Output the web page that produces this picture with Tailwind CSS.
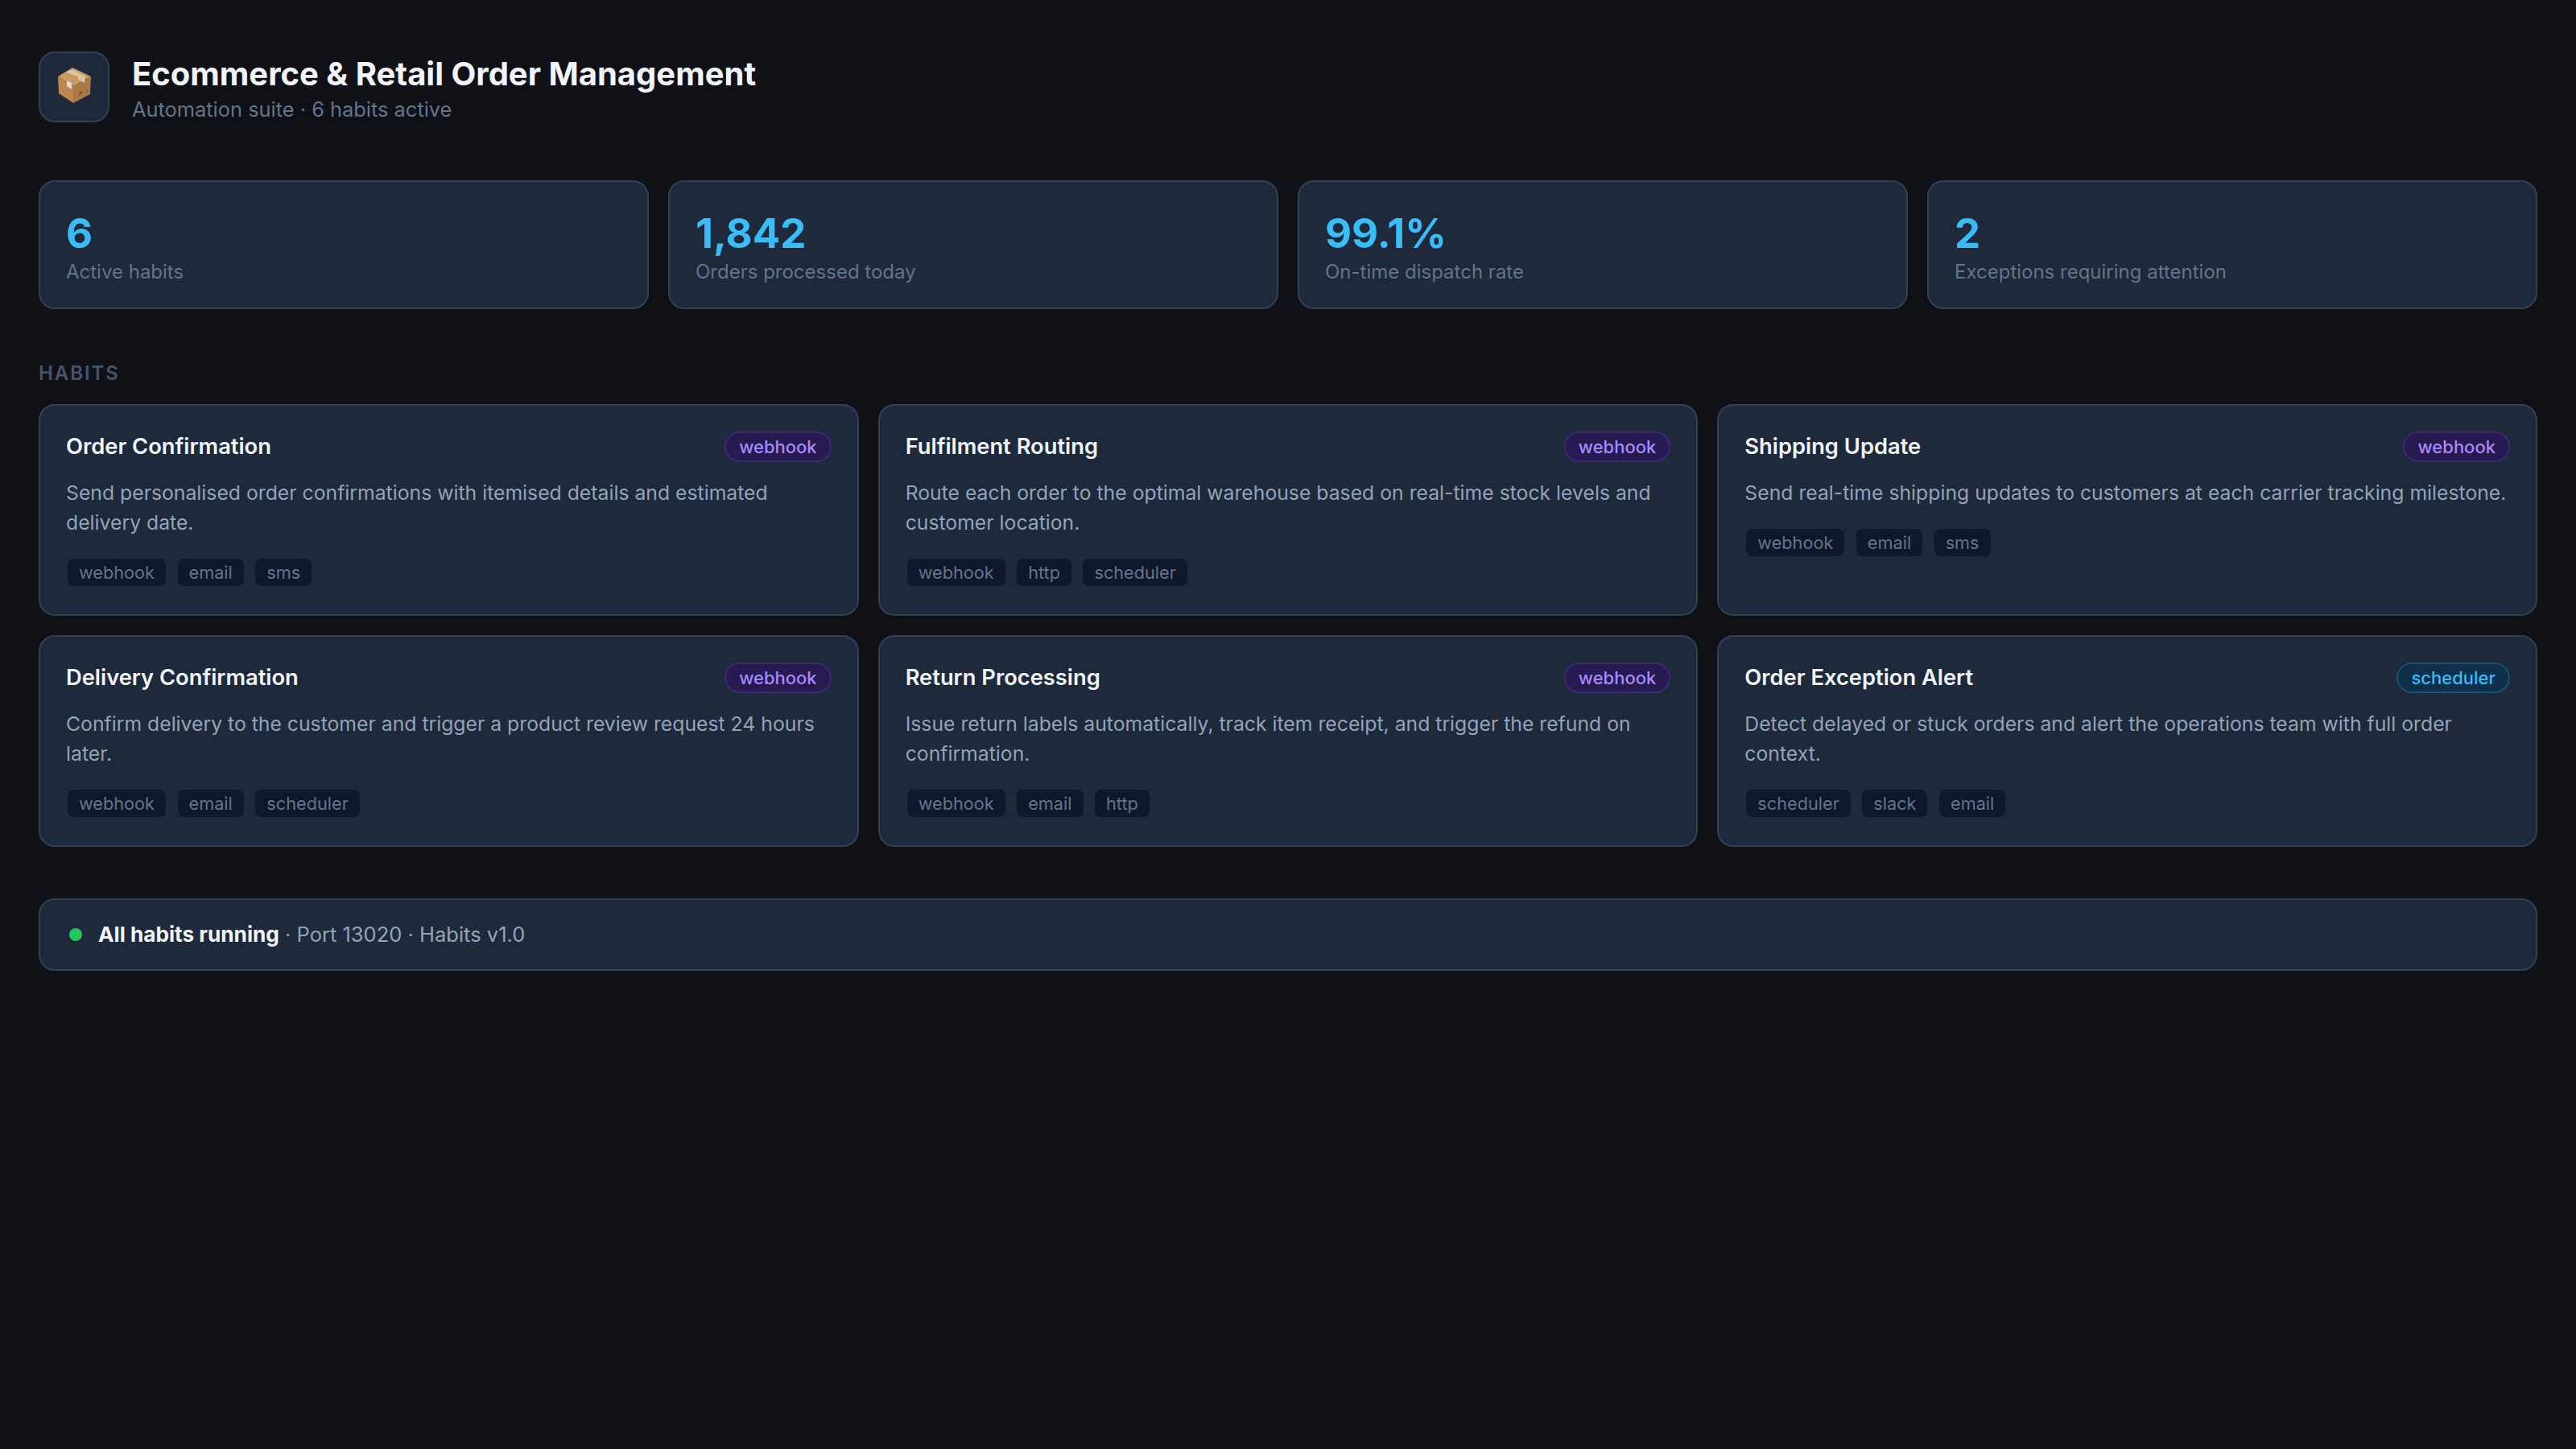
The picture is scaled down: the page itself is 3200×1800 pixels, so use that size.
<!DOCTYPE html>
<html lang="en">
    <head>
        <meta charset="UTF-8">
        <title>Ecommerce &amp; Retail Order Management</title>
        <script src="https://cdn.jsdelivr.net/npm/@tailwindcss/browser@4"></script>
    </head>
    <body class="bg-[#0f1117] min-h-screen font-['Inter',sans-serif] [font-optical-sizing:none] text-[#f1f5f9]">
        <div class="px-[48px] pt-[64px] pb-[64px]">
            <!-- header -->
            <div class="flex items-center gap-[28px] h-[88px]">
                <div class="w-[88px] h-[88px] shrink-0 rounded-[20px] bg-[#1e293b] border-2 border-[#334155] flex items-center justify-center">
                    <svg width="64" height="64" viewBox="60 76 64 64">
                        <path d="M90 84 L113 95 L91 107 L72 95 Z" fill="#c99a62"/>
                        <path d="M72 95 L91 107 L91 128 L73 116 Z" fill="#bb8850"/>
                        <path d="M113 95 L91 107 L91 128 L112 117 Z" fill="#ab7945"/>
                        <path d="M82 90 L90 86 L106 95 L105 103 L97 99 L97 95 Z" fill="#d9c3a3"/>
                        <path d="M83 100 L89 103 L89 111 L83 107 Z" fill="#ddd8d0"/>
                        <path d="M98 115 L103 113 L101 117 L99 118 Z" fill="#7a5230"/>
                        <path d="M107 111 L108.500 110.500 L108.500 115 L107 116 Z" fill="#8a5f38"/>
                    </svg>
                </div>
                <div>
                    <h1 class="text-[40px] leading-[54px] pt-[1px] font-bold text-[#f1f5f9]">Ecommerce &amp; Retail Order Management</h1>
                    <p class="mt-[1px] text-[25.4px] leading-[32px] text-[#64748b]">Automation suite · 6 habits active</p>
                </div>
            </div>

            <!-- stats -->
            <div class="grid grid-cols-4 gap-[24px] mt-[72px]">
                <div class="h-[160px] rounded-[20px] bg-[#1e293b] border-2 border-[#334155] px-[32px] pt-[32px]">
                    <div class="text-[51px] leading-[64px] mb-[1px] font-bold text-[#38bdf8]">6</div>
                    <div class="text-[24px] leading-[30px] text-[#64748b]">Active habits</div>
                </div>
                <div class="h-[160px] rounded-[20px] bg-[#1e293b] border-2 border-[#334155] px-[32px] pt-[32px]">
                    <div class="text-[51px] leading-[64px] mb-[1px] font-bold text-[#38bdf8]">1,842</div>
                    <div class="text-[24px] leading-[30px] text-[#64748b]">Orders processed today</div>
                </div>
                <div class="h-[160px] rounded-[20px] bg-[#1e293b] border-2 border-[#334155] px-[32px] pt-[32px]">
                    <div class="text-[51px] leading-[64px] mb-[1px] font-bold text-[#38bdf8]">99.1%</div>
                    <div class="text-[24px] leading-[30px] text-[#64748b]">On-time dispatch rate</div>
                </div>
                <div class="h-[160px] rounded-[20px] bg-[#1e293b] border-2 border-[#334155] px-[32px] pt-[32px]">
                    <div class="text-[51px] leading-[64px] mb-[1px] font-bold text-[#38bdf8]">2</div>
                    <div class="text-[24px] leading-[30px] text-[#64748b]">Exceptions requiring attention</div>
                </div>
            </div>

            <h2 class="mt-[65px] mb-[23px] text-[24px] leading-[30px] font-semibold tracking-[1.92px] text-[#475569]">HABITS</h2>

            <!-- habit cards -->
            <div class="grid grid-cols-3 gap-[24px]">
                <div class="h-[263px] rounded-[20px] bg-[#1e293b] border-2 border-[#334155] p-[32px]">
                    <div class="flex items-center justify-between h-[38px]">
                        <h3 class="text-[27.3px] font-semibold text-[#f1f5f9]">Order Confirmation</h3>
                        <span class="h-[38px] px-[16px] flex items-center rounded-full border-2 border-[#3b2a72] bg-[#261a50] text-[22px] font-medium text-[#a78bfa]">webhook</span>
                    </div>
                    <p class="mt-[20px] text-[24.75px] leading-[37px] text-[#94a3b8]">Send personalised order confirmations with itemised details and estimated delivery date.</p>
                    <div class="mt-[24px] flex gap-[10.5px]">
                        <span class="h-[38px] px-[14px] flex items-center rounded-[10px] border-2 border-[#1e293b] bg-[#0f172a] text-[21.7px] text-[#64748b]">webhook</span>
                        <span class="h-[38px] px-[14px] flex items-center rounded-[10px] border-2 border-[#1e293b] bg-[#0f172a] text-[21.7px] text-[#64748b]">email</span>
                        <span class="h-[38px] px-[14px] flex items-center rounded-[10px] border-2 border-[#1e293b] bg-[#0f172a] text-[21.7px] text-[#64748b]">sms</span>
                    </div>
                </div>
                <div class="h-[263px] rounded-[20px] bg-[#1e293b] border-2 border-[#334155] p-[32px]">
                    <div class="flex items-center justify-between h-[38px]">
                        <h3 class="text-[27.3px] font-semibold text-[#f1f5f9]">Fulfilment Routing</h3>
                        <span class="h-[38px] px-[16px] flex items-center rounded-full border-2 border-[#3b2a72] bg-[#261a50] text-[22px] font-medium text-[#a78bfa]">webhook</span>
                    </div>
                    <p class="mt-[20px] text-[24.75px] leading-[37px] text-[#94a3b8]">Route each order to the optimal warehouse based on real-time stock levels and customer location.</p>
                    <div class="mt-[24px] flex gap-[10.5px]">
                        <span class="h-[38px] px-[14px] flex items-center rounded-[10px] border-2 border-[#1e293b] bg-[#0f172a] text-[21.7px] text-[#64748b]">webhook</span>
                        <span class="h-[38px] px-[14px] flex items-center rounded-[10px] border-2 border-[#1e293b] bg-[#0f172a] text-[21.7px] text-[#64748b]">http</span>
                        <span class="h-[38px] px-[14px] flex items-center rounded-[10px] border-2 border-[#1e293b] bg-[#0f172a] text-[21.7px] text-[#64748b]">scheduler</span>
                    </div>
                </div>
                <div class="h-[263px] rounded-[20px] bg-[#1e293b] border-2 border-[#334155] p-[32px]">
                    <div class="flex items-center justify-between h-[38px]">
                        <h3 class="text-[27.3px] font-semibold text-[#f1f5f9]">Shipping Update</h3>
                        <span class="h-[38px] px-[16px] flex items-center rounded-full border-2 border-[#3b2a72] bg-[#261a50] text-[22px] font-medium text-[#a78bfa]">webhook</span>
                    </div>
                    <p class="mt-[20px] text-[24.75px] leading-[37px] text-[#94a3b8]">Send real-time shipping updates to customers at each carrier tracking milestone.</p>
                    <div class="mt-[24px] flex gap-[10.5px]">
                        <span class="h-[38px] px-[14px] flex items-center rounded-[10px] border-2 border-[#1e293b] bg-[#0f172a] text-[21.7px] text-[#64748b]">webhook</span>
                        <span class="h-[38px] px-[14px] flex items-center rounded-[10px] border-2 border-[#1e293b] bg-[#0f172a] text-[21.7px] text-[#64748b]">email</span>
                        <span class="h-[38px] px-[14px] flex items-center rounded-[10px] border-2 border-[#1e293b] bg-[#0f172a] text-[21.7px] text-[#64748b]">sms</span>
                    </div>
                </div>
                <div class="h-[263px] rounded-[20px] bg-[#1e293b] border-2 border-[#334155] p-[32px]">
                    <div class="flex items-center justify-between h-[38px]">
                        <h3 class="text-[27.3px] font-semibold text-[#f1f5f9]">Delivery Confirmation</h3>
                        <span class="h-[38px] px-[16px] flex items-center rounded-full border-2 border-[#3b2a72] bg-[#261a50] text-[22px] font-medium text-[#a78bfa]">webhook</span>
                    </div>
                    <p class="mt-[20px] text-[24.75px] leading-[37px] text-[#94a3b8]">Confirm delivery to the customer and trigger a product review request 24 hours later.</p>
                    <div class="mt-[24px] flex gap-[10.5px]">
                        <span class="h-[38px] px-[14px] flex items-center rounded-[10px] border-2 border-[#1e293b] bg-[#0f172a] text-[21.7px] text-[#64748b]">webhook</span>
                        <span class="h-[38px] px-[14px] flex items-center rounded-[10px] border-2 border-[#1e293b] bg-[#0f172a] text-[21.7px] text-[#64748b]">email</span>
                        <span class="h-[38px] px-[14px] flex items-center rounded-[10px] border-2 border-[#1e293b] bg-[#0f172a] text-[21.7px] text-[#64748b]">scheduler</span>
                    </div>
                </div>
                <div class="h-[263px] rounded-[20px] bg-[#1e293b] border-2 border-[#334155] p-[32px]">
                    <div class="flex items-center justify-between h-[38px]">
                        <h3 class="text-[27.3px] font-semibold text-[#f1f5f9]">Return Processing</h3>
                        <span class="h-[38px] px-[16px] flex items-center rounded-full border-2 border-[#3b2a72] bg-[#261a50] text-[22px] font-medium text-[#a78bfa]">webhook</span>
                    </div>
                    <p class="mt-[20px] text-[24.75px] leading-[37px] text-[#94a3b8]">Issue return labels automatically, track item receipt, and trigger the refund on confirmation.</p>
                    <div class="mt-[24px] flex gap-[10.5px]">
                        <span class="h-[38px] px-[14px] flex items-center rounded-[10px] border-2 border-[#1e293b] bg-[#0f172a] text-[21.7px] text-[#64748b]">webhook</span>
                        <span class="h-[38px] px-[14px] flex items-center rounded-[10px] border-2 border-[#1e293b] bg-[#0f172a] text-[21.7px] text-[#64748b]">email</span>
                        <span class="h-[38px] px-[14px] flex items-center rounded-[10px] border-2 border-[#1e293b] bg-[#0f172a] text-[21.7px] text-[#64748b]">http</span>
                    </div>
                </div>
                <div class="h-[263px] rounded-[20px] bg-[#1e293b] border-2 border-[#334155] p-[32px]">
                    <div class="flex items-center justify-between h-[38px]">
                        <h3 class="text-[27.3px] font-semibold text-[#f1f5f9]">Order Exception Alert</h3>
                        <span class="h-[38px] px-[16px] flex items-center rounded-full border-2 border-[#1a5070] bg-[#0e304a] text-[22px] font-medium text-[#38bdf8]">scheduler</span>
                    </div>
                    <p class="mt-[20px] text-[24.75px] leading-[37px] text-[#94a3b8]">Detect delayed or stuck orders and alert the operations team with full order context.</p>
                    <div class="mt-[24px] flex gap-[10.5px]">
                        <span class="h-[38px] px-[14px] flex items-center rounded-[10px] border-2 border-[#1e293b] bg-[#0f172a] text-[21.7px] text-[#64748b]">scheduler</span>
                        <span class="h-[38px] px-[14px] flex items-center rounded-[10px] border-2 border-[#1e293b] bg-[#0f172a] text-[21.7px] text-[#64748b]">slack</span>
                        <span class="h-[38px] px-[14px] flex items-center rounded-[10px] border-2 border-[#1e293b] bg-[#0f172a] text-[21.7px] text-[#64748b]">email</span>
                    </div>
                </div>
            </div>

            <!-- footer status -->
            <div class="mt-[64px] h-[90px] rounded-[20px] bg-[#1e293b] border-2 border-[#334155] px-[36px] flex items-center gap-[20px]">
                <span class="w-[16px] h-[16px] rounded-full bg-[#22c55e]"></span>
                <p class="text-[25.5px] text-[#94a3b8]"><strong class="text-[26.2px] font-bold text-[#f1f5f9]">All habits running</strong> · Port 13020 · Habits v1.0</p>
            </div>
        </div>
    </body>
</html>
